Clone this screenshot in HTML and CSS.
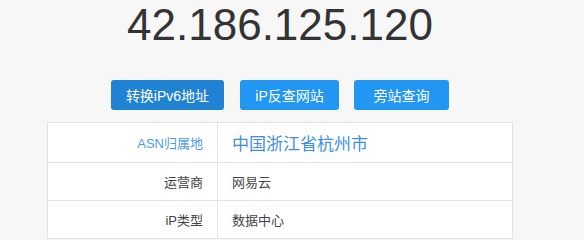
FILE: index.html
```html
<!DOCTYPE html>
<html lang="zh-CN">
<head>
<meta charset="utf-8">
<title>42.186.125.120</title>
<link rel="stylesheet" href="styles.css">
</head>
<body>
<div class="wrap">
  <h1 class="ip">42.186.125.120</h1>
  <div class="actions">
    <a class="btn btn-dark btn-w1" href="#">转换iPv6地址</a>
    <a class="btn btn-w2" href="#">iP反查网站</a>
    <a class="btn btn-w3" href="#">旁站查询</a>
  </div>
  <table class="info">
    <tr class="row-main">
      <th class="label label-blue">ASN归属地</th>
      <td class="value value-blue">中国浙江省杭州市</td>
    </tr>
    <tr>
      <th class="label">运营商</th>
      <td class="value">网易云</td>
    </tr>
    <tr>
      <th class="label">iP类型</th>
      <td class="value">数据中心</td>
    </tr>
  </table>
</div>
</body>
</html>
```

FILE: styles.css
```css
html, body {
  margin: 0;
  padding: 0;
  background: #f7f7f7;
  font-family: "Liberation Sans", "Noto Sans CJK SC", sans-serif;
  color: #333;
}
.wrap {
  width: 560px;
}
.ip {
  margin: 0;
  font-family: "Liberation Sans", Arial, sans-serif;
  font-weight: normal;
  font-size: 44px;
  line-height: 50px;
  color: #333;
  text-align: center;
}
.actions {
  display: flex;
  justify-content: center;
  margin-top: 30px;
}
.btn {
  display: flex;
  align-items: center;
  justify-content: center;
  height: 30px;
  margin: 0 7px;
  border-radius: 3px;
  background: #2196f3;
  color: #fff;
  font-size: 14px;
  text-decoration: none;
  white-space: nowrap;
}
.btn-dark {
  background: #1f82d2;
}
.btn-w1 { width: 113px; margin-right: 8px; }
.btn-w2 { width: 99px; margin-left: 8px; margin-right: 7px; }
.btn-w3 { width: 95px; margin-left: 8px; }
.info {
  width: 466px;
  margin: 12px auto 0;
  border-collapse: collapse;
  background: #fff;
}
.info th, .info td {
  border: 1px solid #e3e3e3;
  height: 37px;
  font-size: 13px;
  font-weight: normal;
}
.row-main th, .row-main td {
  height: 39px;
}
.label {
  width: 155px;
  padding: 0 14px 0 0;
  text-align: right;
  color: #444;
}
.value {
  padding: 0 0 0 14px;
  text-align: left;
  color: #444;
}
.label-blue {
  color: #4d9de3;
}
.value-blue {
  font-size: 17px !important;
  color: #3d8fde;
}
```
